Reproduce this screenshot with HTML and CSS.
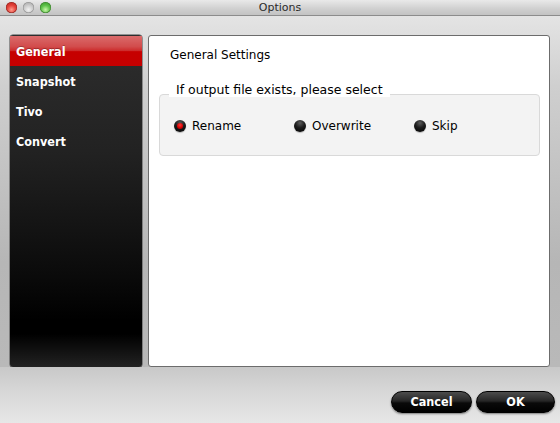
FILE: index.html
```html
<!DOCTYPE html>
<html>
<head>
<meta charset="utf-8">
<title>Options</title>
<link rel="stylesheet" href="styles.css">
</head>
<body>
<div class="window">
  <div class="titlebar">
    <div class="lights">
      <span class="light red"></span>
      <span class="light gray"></span>
      <span class="light green"></span>
    </div>
    <div class="title">Options</div>
  </div>
  <div class="main">
    <div class="sidebar">
      <div class="nav-item active">General</div>
      <div class="nav-item">Snapshot</div>
      <div class="nav-item">Tivo</div>
      <div class="nav-item">Convert</div>
    </div>
    <div class="content">
      <div class="heading">General Settings</div>
      <div class="legend">If output file exists, please select</div>
      <div class="group">
        <label class="option"><span class="radio checked"></span><span>Rename</span></label>
        <label class="option"><span class="radio"></span><span>Overwrite</span></label>
        <label class="option"><span class="radio"></span><span>Skip</span></label>
      </div>
    </div>
  </div>
  <div class="footer">
    <button class="btn btn-cancel">Cancel</button>
    <button class="btn btn-ok">OK</button>
  </div>
</div>
</body>
</html>
```

FILE: styles.css
```css
* { box-sizing: border-box; }
html, body { margin: 0; padding: 0; }
body {
  width: 560px;
  height: 423px;
  overflow: hidden;
  font-family: "DejaVu Sans", sans-serif;
  font-size: 12px;
  color: #000;
}
.window {
  display: flex;
  flex-direction: column;
  height: 423px;
}
.titlebar {
  height: 16px;
  flex: none;
  display: flex;
  align-items: center;
  position: relative;
  background: linear-gradient(#e9e9e9, #cfcfcf 60%, #c3c3c3);
  border-bottom: 1px solid #8c8c8c;
}
.lights {
  display: flex;
  gap: 6px;
  padding-left: 6px;
  margin-top: -1px;
}
.light {
  width: 11px;
  height: 11px;
  border-radius: 50%;
  display: block;
}
.light.red {
  background: radial-gradient(circle at 50% 70%, #ff9b8c 0, #e5443b 45%, #b01a14 100%);
  box-shadow: inset 0 0 0 0.5px #8a2520;
}
.light.gray {
  background: radial-gradient(circle at 50% 70%, #f2f2f2 0, #cdcdcd 45%, #9a9a9a 100%);
  box-shadow: inset 0 0 0 0.5px #8e8e8e;
}
.light.green {
  background: radial-gradient(circle at 50% 70%, #c9f7a8 0, #5fc34a 45%, #2f8a1e 100%);
  box-shadow: inset 0 0 0 0.5px #3a7a2a;
}
.title {
  position: absolute;
  left: 0;
  right: 0;
  top: 0;
  text-align: center;
  font-size: 11px;
  line-height: 15px;
  color: #2a2a2a;
  pointer-events: none;
}
.main {
  flex: none;
  height: 351px;
  display: flex;
  gap: 6px;
  padding: 19px 10px 0 10px;
  background: linear-gradient(#e4e4e4 0, #cfcfcf 20%, #b6b6b6 70%, #b9b9b9 100%);
}
.sidebar {
  width: 132px;
  flex: none;
  border-radius: 3px;
  padding-top: 1px;
  background: linear-gradient(#2e2e2e 0, #222 35%, #0c0c0c 70%, #000 86%, #000 90%, #222 100%);
  box-shadow: 0 0 0 0.5px #444;
}
.nav-item {
  height: 30px;
  padding-top: 1px;
  line-height: 29px;
  padding-left: 6px;
  font-family: "DejaVu Sans Condensed", "DejaVu Sans", sans-serif;
  font-weight: bold;
  font-size: 12.5px;
  color: #fff;
}
.nav-item.active {
  background: linear-gradient(#da6b6b 0, #d24c4c 35%, #cc2a2a 50%, #c60000 52%, #c50000 100%);
  text-shadow: 0 -1px 0 rgba(0,0,0,0.25);
}
.content {
  flex: 1;
  height: 332px;
  background: #fff;
  border: 1px solid #6c6c6c;
  border-radius: 3px;
  padding: 11px 9px 0 10px;
  display: flex;
  flex-direction: column;
  align-items: stretch;
}
.heading {
  padding-left: 11px;
  line-height: 16px;
  height: 16px;
}
.legend {
  align-self: flex-start;
  margin: 18px 0 -3px 10px;
  padding: 1px 7px 0 7px;
  height: 16px;
  line-height: 15px;
  font-size: 12.5px;
  background: #fff;
  position: relative;
  z-index: 1;
}
.group {
  height: 62px;
  background: #f3f3f3;
  border: 1px solid #d9d9d9;
  border-radius: 4px;
  display: flex;
  align-items: center;
  padding: 2px 0 0 14px;
}
.option {
  width: 120px;
  display: flex;
  align-items: center;
  gap: 6px;
}
.radio {
  width: 12px;
  height: 12px;
  border-radius: 50%;
  flex: none;
  display: flex;
  align-items: center;
  justify-content: center;
  background: radial-gradient(circle at 50% 25%, #5a5a5a 0, #1c1c1c 45%, #000 100%);
  box-shadow: 0 1px 1px rgba(0,0,0,0.25);
}
.radio.checked::after {
  content: "";
  width: 6px;
  height: 6px;
  border-radius: 50%;
  background: radial-gradient(circle at 50% 35%, #ff3a3a 0, #d40000 60%, #9a0000 100%);
}
.footer {
  flex: 1;
  display: flex;
  justify-content: flex-end;
  align-items: flex-start;
  gap: 4px;
  padding: 24px 5px 0 0;
  background: linear-gradient(#c8c8c8 0, #d6d6d6 40%, #e7e7e7 100%);
}
.btn {
  height: 22px;
  border: 1px solid #000;
  border-radius: 11px;
  background: linear-gradient(#4c4c4c 0, #262626 45%, #0a0a0a 55%, #000 100%);
  color: #fff;
  font-family: "DejaVu Sans Condensed", "DejaVu Sans", sans-serif;
  font-weight: bold;
  font-size: 12.5px;
  line-height: 20px;
  padding: 0;
  box-shadow: 0 1px 2px rgba(0,0,0,0.45);
  text-align: center;
}
.btn-cancel { width: 81px; }
.btn-ok { width: 79px; }
```
